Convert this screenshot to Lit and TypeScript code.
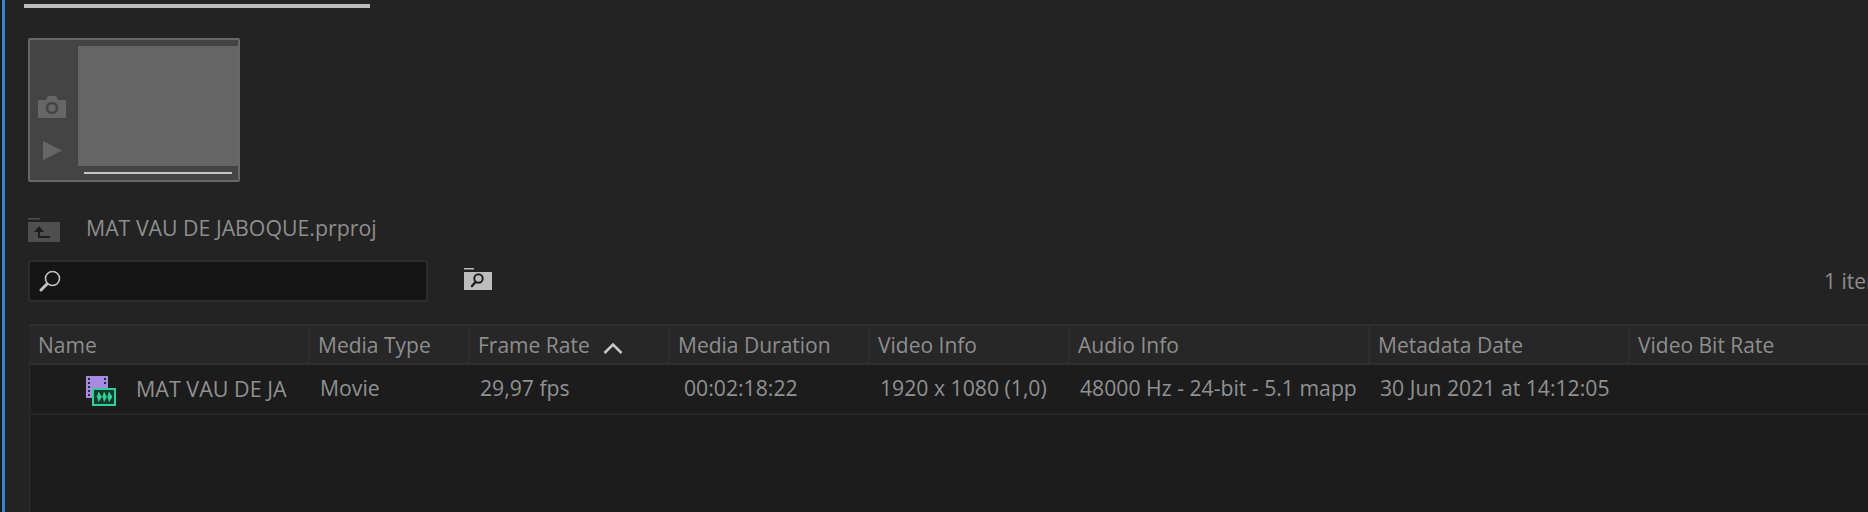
import { LitElement, html, css, svg } from "lit";
import { customElement } from "lit/decorators.js";

const cols = [
  { h: "Name", w: 281, cls: "" },
  { h: "Media Type", w: 160 },
  { h: "Frame Rate", w: 200, sort: true },
  { h: "Media Duration", w: 200 },
  { h: "Video Info", w: 200 },
  { h: "Audio Info", w: 300 },
  { h: "Metadata Date", w: 260 },
  { h: "Video Bit Rate", w: 300 },
];
const cells = [
  { t: "Movie", pad: 10 },
  { t: "29,97 fps", pad: 10 },
  { t: "00:02:18:22", pad: 14 },
  { t: "1920 x 1080 (1,0)", pad: 10 },
  { t: "48000 Hz - 24-bit - 5.1 mapp", pad: 10 },
  { t: "30 Jun 2021 at 14:12:05", pad: 10 },
  { t: "", pad: 10 },
];

@customElement("app-root")
export class AppRoot extends LitElement {
  static styles = css`
    :host { display: block; width: 1868px; height: 512px; overflow: hidden; background: #232323; font-family: "Open Sans", "Noto Sans", sans-serif; color: #8e8e8e; }
    .page { display: flex; height: 512px; }
    .edge { width: 2px; background: #1b1b1b; flex: none; }
    .blue { width: 3px; background: #3a83d0; flex: none; }
    .main { flex: 1; min-width: 0; display: flex; flex-direction: column; }
    .tabline { width: 346px; height: 4px; background: #bcbcbc; margin: 4px 0 0 19px; flex: none; }
    .thumb { width: 212px; height: 144px; margin: 30px 0 0 23px; box-sizing: border-box; border: 2px solid #676767; border-radius: 2px; background: #444; display: flex; flex: none; }
    .tools { width: 48px; flex: none; display: flex; flex-direction: column; align-items: center; padding: 56px 4px 0 0; box-sizing: border-box; gap: 23px; }
    .tools svg { display: block; }
    .view { flex: 1; display: flex; flex-direction: column; padding-top: 6px; }
    .frame { height: 120px; background: #656565; }
    .scrub { height: 2px; background: #c4c4c4; margin: 6px 6px 0 6px; }
    .crumb { display: flex; align-items: center; margin: 36px 0 0 23px; height: 24px; flex: none; }
    .crumb span { margin-left: 26px; margin-top: -5px; font-size: 21.3px; line-height: 24px; white-space: nowrap; }
    .bar { display: flex; align-items: center; margin: 18px 0 0 23px; height: 42px; flex: none; }
    .search { width: 400px; height: 42px; box-sizing: border-box; background: #151515; border: 2px solid #2d2d2d; border-radius: 4px; display: flex; align-items: center; padding-left: 8px; }
    .findfolder { margin-left: 36px; margin-top: -4px; }
    .findfolder svg { display: block; }
    .count { margin-left: auto; font-size: 21px; white-space: nowrap; width: 44px; overflow: hidden; }
    .table { flex: 1; margin: 22px 0 0 24px; background: #1c1c1c; border-left: 1px solid #2e2e2e; min-height: 0; }
    .row { display: flex; white-space: nowrap; }
    .head { height: 41px; background: #272727; border-top: 2px solid #2e2e2e; border-bottom: 2px solid #2e2e2e; box-sizing: border-box; margin-left: -1px; }
    .hc { box-sizing: border-box; flex: none; height: 100%; border-right: 2px solid #2e2e2e; padding-left: 8px; font-size: 21px; line-height: 36px; display: flex; align-items: center; }
    .hc:first-child { padding-left: 9px; }
    .hc svg { margin-left: 13px; margin-top: 6px; }
    .body { height: 48px; border-bottom: 2px solid #262626; box-sizing: content-box; align-items: center; margin-left: -1px; }
    .c { flex: none; box-sizing: border-box; font-size: 21.2px; overflow: hidden; color: #919191; margin-top: -4px; }
    .namecell { display: flex; align-items: center; padding-left: 57px; gap: 20px; font-size: 21.5px; color: #919191; margin-top: 0; }
    .namecell svg { flex: none; margin-top: 4px; }
    .namecell span { margin-top: -2px; }
  `;

  render() {
    return html`<div class="page">
      <div class="edge"></div><div class="blue"></div>
      <div class="main">
        <div class="tabline"></div>
        <div class="thumb">
          <div class="tools">
            <svg width="28" height="22" viewBox="0 0 28 22"><path fill="#666" d="M0 4h8l2-4h8l2 4h8v18H0z"/><circle cx="14" cy="12" r="5" fill="none" stroke="#444" stroke-width="2.500"/></svg>
            <svg width="19" height="19" viewBox="0 0 19 19"><path fill="#666" d="M0 0l19 9.500L0 19z"/></svg>
          </div>
          <div class="view"><div class="frame"></div><div class="scrub"></div></div>
        </div>
        <div class="crumb">
          ${svg`<svg width="32" height="24" viewBox="0 0 32 24"><path fill="#4f4f4f" d="M0 0h12v1.500H0zM0 4h32v20H0z"/><path fill="#1e1e1e" d="M11 8l5 6H6z"/><path fill="none" stroke="#1e1e1e" stroke-width="2" d="M11 13v6h11"/></svg>`}
          <span>MAT VAU DE JABOQUE.prproj</span>
        </div>
        <div class="bar">
          <div class="search">
            <svg width="24" height="24" viewBox="0 0 24 24"><circle cx="14.500" cy="9.500" r="7" fill="none" stroke="#c4c4c4" stroke-width="1.600"/><path stroke="#c4c4c4" stroke-width="3" stroke-linecap="round" d="M9 15l-6 6"/></svg>
          </div>
          <div class="findfolder">
            <svg width="28" height="22" viewBox="0 0 28 22"><path fill="#bdbdbd" d="M0 0h10v1.500H0zM0 4h28v18H0z"/><circle cx="14.500" cy="10.500" r="4.200" fill="none" stroke="#1f1f1f" stroke-width="2"/><path stroke="#1f1f1f" stroke-width="2.500" stroke-linecap="round" d="M11.500 14L8 18"/></svg>
          </div>
          <div class="count">1 item</div>
        </div>
        <div class="table">
          <div class="row head">
            ${cols.map((c) => html`<div class="hc" style="width:${c.w}px">${c.h}${c.sort
              ? html`<svg width="20" height="12" viewBox="0 0 20 12"><path fill="none" stroke="#c8c8c8" stroke-width="2.500" d="M1.500 11L10 2.500 18.500 11"/></svg>`
              : ""}</div>`)}
          </div>
          <div class="row body">
            <div class="c namecell" style="width:${cols[0].w}px">
              <svg width="30" height="30" viewBox="0 0 30 30">
                <rect x="0" y="0" width="22" height="22" fill="#a78be0"/>
                <path fill="#2b2540" d="M2 2h2v2H2zM2 6h2v2H2zM2 10h2v2H2zM2 14h2v2H2zM2 18h2v2H2zM18 2h2v2h-2zM18 6h2v2h-2z"/>
                <rect x="7" y="13" width="22" height="16" fill="#16382d" stroke="#30d096" stroke-width="2"/>
                <path fill="#30d096" d="M9 20.500h2l1.500-5 3.500 5.500-3.500 5-1.500-5H9zM15 20.500h1.500l1.500-5 3 5.500-3 5-1.500-5H15zM21 20.500h.500l1.500-5 3.500 5.500-3.500 5-1.500-5z"/>
              </svg>
              <span>MAT VAU DE JA</span>
            </div>
            ${cells.map((c, i) => html`<div class="c" style="width:${cols[i + 1].w}px;padding-left:${c.pad}px">${c.t}</div>`)}
          </div>
        </div>
      </div>
    </div>`;
  }
}
